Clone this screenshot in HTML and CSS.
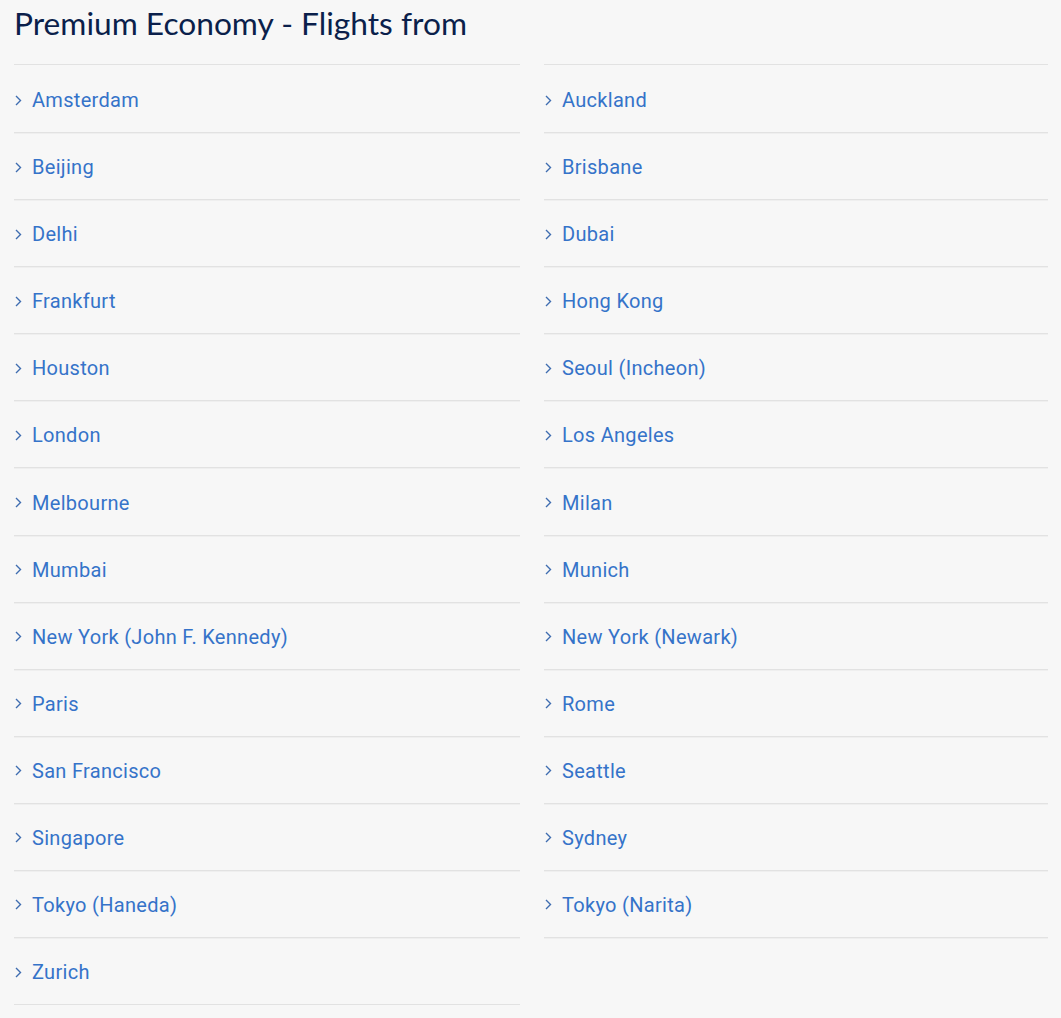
FILE: index.html
```html
<!DOCTYPE html>
<html>
<head>
<meta charset="utf-8">
<link rel="stylesheet" href="styles.css">
</head>
<body>
<div class="page">
  <h1 class="title">Premium Economy - Flights from</h1>
  <div class="cols">
    <ul class="list">
      <li class="item"><svg class="chev" viewBox="0 0 7 11"><polyline points="1,1 5.5,5.5 1,10"/></svg><a class="link">Amsterdam</a></li>
      <li class="item"><svg class="chev" viewBox="0 0 7 11"><polyline points="1,1 5.5,5.5 1,10"/></svg><a class="link">Beijing</a></li>
      <li class="item"><svg class="chev" viewBox="0 0 7 11"><polyline points="1,1 5.5,5.5 1,10"/></svg><a class="link">Delhi</a></li>
      <li class="item"><svg class="chev" viewBox="0 0 7 11"><polyline points="1,1 5.5,5.5 1,10"/></svg><a class="link">Frankfurt</a></li>
      <li class="item"><svg class="chev" viewBox="0 0 7 11"><polyline points="1,1 5.5,5.5 1,10"/></svg><a class="link">Houston</a></li>
      <li class="item"><svg class="chev" viewBox="0 0 7 11"><polyline points="1,1 5.5,5.5 1,10"/></svg><a class="link">London</a></li>
      <li class="item"><svg class="chev" viewBox="0 0 7 11"><polyline points="1,1 5.5,5.5 1,10"/></svg><a class="link">Melbourne</a></li>
      <li class="item"><svg class="chev" viewBox="0 0 7 11"><polyline points="1,1 5.5,5.5 1,10"/></svg><a class="link">Mumbai</a></li>
      <li class="item"><svg class="chev" viewBox="0 0 7 11"><polyline points="1,1 5.5,5.5 1,10"/></svg><a class="link">New York (John F. Kennedy)</a></li>
      <li class="item"><svg class="chev" viewBox="0 0 7 11"><polyline points="1,1 5.5,5.5 1,10"/></svg><a class="link">Paris</a></li>
      <li class="item"><svg class="chev" viewBox="0 0 7 11"><polyline points="1,1 5.5,5.5 1,10"/></svg><a class="link">San Francisco</a></li>
      <li class="item"><svg class="chev" viewBox="0 0 7 11"><polyline points="1,1 5.5,5.5 1,10"/></svg><a class="link">Singapore</a></li>
      <li class="item"><svg class="chev" viewBox="0 0 7 11"><polyline points="1,1 5.5,5.5 1,10"/></svg><a class="link">Tokyo (Haneda)</a></li>
      <li class="item"><svg class="chev" viewBox="0 0 7 11"><polyline points="1,1 5.5,5.5 1,10"/></svg><a class="link">Zurich</a></li>
    </ul>
    <ul class="list">
      <li class="item"><svg class="chev" viewBox="0 0 7 11"><polyline points="1,1 5.5,5.5 1,10"/></svg><a class="link">Auckland</a></li>
      <li class="item"><svg class="chev" viewBox="0 0 7 11"><polyline points="1,1 5.5,5.5 1,10"/></svg><a class="link">Brisbane</a></li>
      <li class="item"><svg class="chev" viewBox="0 0 7 11"><polyline points="1,1 5.5,5.5 1,10"/></svg><a class="link">Dubai</a></li>
      <li class="item"><svg class="chev" viewBox="0 0 7 11"><polyline points="1,1 5.5,5.5 1,10"/></svg><a class="link">Hong Kong</a></li>
      <li class="item"><svg class="chev" viewBox="0 0 7 11"><polyline points="1,1 5.5,5.5 1,10"/></svg><a class="link">Seoul (Incheon)</a></li>
      <li class="item"><svg class="chev" viewBox="0 0 7 11"><polyline points="1,1 5.5,5.5 1,10"/></svg><a class="link">Los Angeles</a></li>
      <li class="item"><svg class="chev" viewBox="0 0 7 11"><polyline points="1,1 5.5,5.5 1,10"/></svg><a class="link">Milan</a></li>
      <li class="item"><svg class="chev" viewBox="0 0 7 11"><polyline points="1,1 5.5,5.5 1,10"/></svg><a class="link">Munich</a></li>
      <li class="item"><svg class="chev" viewBox="0 0 7 11"><polyline points="1,1 5.5,5.5 1,10"/></svg><a class="link">New York (Newark)</a></li>
      <li class="item"><svg class="chev" viewBox="0 0 7 11"><polyline points="1,1 5.5,5.5 1,10"/></svg><a class="link">Rome</a></li>
      <li class="item"><svg class="chev" viewBox="0 0 7 11"><polyline points="1,1 5.5,5.5 1,10"/></svg><a class="link">Seattle</a></li>
      <li class="item"><svg class="chev" viewBox="0 0 7 11"><polyline points="1,1 5.5,5.5 1,10"/></svg><a class="link">Sydney</a></li>
      <li class="item"><svg class="chev" viewBox="0 0 7 11"><polyline points="1,1 5.5,5.5 1,10"/></svg><a class="link">Tokyo (Narita)</a></li>
    </ul>
  </div>
</div>
</body>
</html>
```
FILE: styles.css
```css
html, body {
  margin: 0;
  padding: 0;
  background: #f7f7f7;
}
.page {
  padding: 0 13px 0 14px;
}
.title {
  margin: 0;
  height: 64px;
  padding-top: 3px;
  box-sizing: border-box;
  font-family: "Lato", sans-serif;
  font-weight: 400;
  font-size: 31.7px;
  line-height: 40px;
  color: #0b1f4b;
}
.cols {
  display: grid;
  grid-template-columns: 506px 504px;
  column-gap: 24px;
  align-items: start;
}
.list {
  list-style: none;
  margin: 0;
  padding: 1px 0 0 0;
  border-top: 1px solid #e2e2e2;
}
.item {
  display: flex;
  align-items: center;
  box-sizing: border-box;
  height: 67.08px;
  padding-top: 2px;
  border-bottom: 1px solid #e2e2e2;
  box-shadow: 0 1px 0 #efefef;
  font-family: "Roboto", sans-serif;
  font-size: 20px;
  letter-spacing: 0.3px;
  color: #3573c9;
}
.chev {
  width: 7px;
  height: 11px;
  margin: 0 10px 0 1px;
  fill: none;
  stroke: #3f6db0;
  stroke-width: 1.4;
}
.link {
  color: #3573c9;
}
```
